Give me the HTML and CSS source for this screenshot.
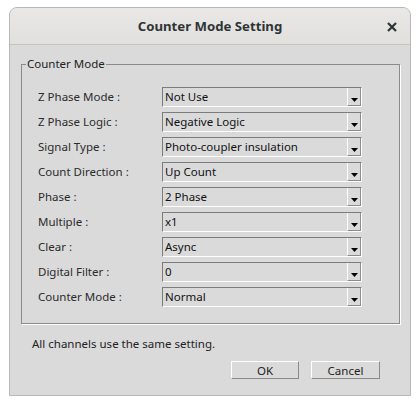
FILE: index.html
```html
<!DOCTYPE html>
<html>
<head>
<meta charset="utf-8">
<link rel="stylesheet" href="styles.css">
</head>
<body>
<div class="window">
  <div class="titlebar">
    <span class="title">Counter Mode Setting</span>
    <span class="close"><svg width="10" height="10" viewBox="0 0 10 10"><path d="M1 1L9 9M9 1L1 9" stroke="#2e3436" stroke-width="2.2" fill="none"/></svg></span>
  </div>
  <div class="content">
    <fieldset class="group">
      <legend class="legend">Counter Mode</legend>
      <div class="rows">
        <div class="label">Z Phase Mode :</div>
        <div class="combo"><span class="value">Not Use</span><span class="btn"><svg width="7" height="4" viewBox="0 0 7 4"><path d="M0 0H7L3.5 4Z" fill="#000"/></svg></span></div>
        <div class="label">Z Phase Logic :</div>
        <div class="combo"><span class="value">Negative Logic</span><span class="btn"><svg width="7" height="4" viewBox="0 0 7 4"><path d="M0 0H7L3.5 4Z" fill="#000"/></svg></span></div>
        <div class="label">Signal Type :</div>
        <div class="combo"><span class="value">Photo-coupler insulation</span><span class="btn"><svg width="7" height="4" viewBox="0 0 7 4"><path d="M0 0H7L3.5 4Z" fill="#000"/></svg></span></div>
        <div class="label">Count Direction :</div>
        <div class="combo"><span class="value">Up Count</span><span class="btn"><svg width="7" height="4" viewBox="0 0 7 4"><path d="M0 0H7L3.5 4Z" fill="#000"/></svg></span></div>
        <div class="label">Phase :</div>
        <div class="combo"><span class="value">2 Phase</span><span class="btn"><svg width="7" height="4" viewBox="0 0 7 4"><path d="M0 0H7L3.5 4Z" fill="#000"/></svg></span></div>
        <div class="label">Multiple :</div>
        <div class="combo"><span class="value">x1</span><span class="btn"><svg width="7" height="4" viewBox="0 0 7 4"><path d="M0 0H7L3.5 4Z" fill="#000"/></svg></span></div>
        <div class="label">Clear :</div>
        <div class="combo"><span class="value">Async</span><span class="btn"><svg width="7" height="4" viewBox="0 0 7 4"><path d="M0 0H7L3.5 4Z" fill="#000"/></svg></span></div>
        <div class="label">Digital Filter :</div>
        <div class="combo"><span class="value">0</span><span class="btn"><svg width="7" height="4" viewBox="0 0 7 4"><path d="M0 0H7L3.5 4Z" fill="#000"/></svg></span></div>
        <div class="label">Counter Mode :</div>
        <div class="combo"><span class="value">Normal</span><span class="btn"><svg width="7" height="4" viewBox="0 0 7 4"><path d="M0 0H7L3.5 4Z" fill="#000"/></svg></span></div>
      </div>
    </fieldset>
    <p class="note">All channels use the same setting.</p>
    <div class="buttons">
      <button class="button ok">OK</button>
      <button class="button cancel">Cancel</button>
    </div>
  </div>
</div>
</body>
</html>
```

FILE: styles.css
```css
html, body {
  margin: 0;
  padding: 0;
  background: #ffffff;
}
body {
  font-family: "Noto Sans", "Open Sans", sans-serif;
  font-size: 11.5px;
  color: #2b2b2b;
}
.window {
  margin: 7px 0 0 9px;
  width: 400px;
  border: 1px solid #b9b8b5;
  border-radius: 8px 8px 0 0;
  background: #dadada;
  overflow: hidden;
}
.titlebar {
  position: relative;
  height: 36px;
  background: linear-gradient(#e9e8e6, #e2e0dd);
  border-bottom: 1px solid #c6c3be;
  display: flex;
  align-items: center;
  justify-content: center;
}
.title {
  font-weight: bold;
  font-size: 13.2px;
  color: #2e3436;
}
.close {
  position: absolute;
  right: 13px;
  top: 14px;
  width: 10px;
  height: 10px;
  display: flex;
}
.content {
  padding: 12px 10px 16px 11px;
}
.group {
  margin: 0;
  padding: 16px 0 16px 16px;
  border: 1px solid #8a8a8a;
  box-shadow: 1px 1px 0 #ffffff;
  min-width: 0;
}
.legend {
  padding: 0 1px;
  margin-left: -12px;
  line-height: 14px;
  color: #222;
}
.rows {
  display: grid;
  grid-template-columns: 124px 200px;
  grid-auto-rows: 20px;
  row-gap: 5px;
  align-items: center;
}
.label {
  line-height: 20px;
}
.combo {
  box-sizing: border-box;
  height: 20px;
  border-top: 1px solid #7c7c7c;
  border-left: 1px solid #7c7c7c;
  border-bottom: 1px solid #ffffff;
  border-right: 1px solid #ffffff;
  display: flex;
  color: #111;
}
.value {
  flex: 1;
  padding-left: 2px;
  line-height: 17px;
}
.btn {
  box-sizing: border-box;
  width: 14px;
  border-left: 1px solid #ffffff;
  border-right: 1px solid #8c8c8c;
  border-bottom: 1px solid #8c8c8c;
  display: flex;
  align-items: flex-end;
  justify-content: center;
  padding-bottom: 3px;
}
.btn svg {
  display: block;
}
.note {
  margin: 12px 0 0 11px;
  line-height: 16px;
  color: #222;
}
.buttons {
  display: flex;
  justify-content: flex-end;
  gap: 12px;
  margin: 9px 20px 0 0;
}
.button {
  box-sizing: border-box;
  height: 18px;
  padding: 0;
  font-family: inherit;
  font-size: 11.5px;
  line-height: 15px;
  color: #222;
  background: #dadada;
  border-top: 1px solid #ffffff;
  border-left: 1px solid #ffffff;
  border-right: 1px solid #8a8a8a;
  border-bottom: 1px solid #8a8a8a;
}
.ok {
  width: 68px;
}
.cancel {
  width: 69px;
}
```
